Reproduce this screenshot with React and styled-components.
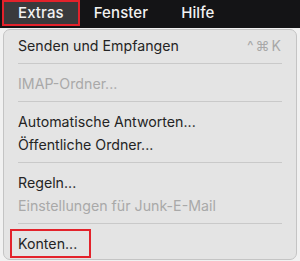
import React from "react";
import styled, { createGlobalStyle } from "styled-components";

const Global = createGlobalStyle`
  html, body { margin: 0; padding: 0; }
  body {
    width: 300px;
    height: 261px;
    overflow: hidden;
    background: #f0f0f0;
    font-family: Inter, "Liberation Sans", Arial, sans-serif;
    -webkit-font-smoothing: antialiased;
  }
`;

const Page = styled.div`
  width: 300px;
  height: 261px;
  display: flex;
  flex-direction: column;
  background: #f1f1f1;
`;

const MenuBar = styled.div`
  height: 28px;
  background: #141416;
  display: flex;
  align-items: stretch;
  padding-left: 2px;
  flex-shrink: 0;
`;

const MenuTitle = styled.div`
  display: flex;
  align-items: center;
  padding: 0 ${(p) => (p.$active ? "14px" : "11px")} 2px;
  margin-right: ${(p) => (p.$active ? "3px" : "11px")};
  height: 26px;
  box-sizing: border-box;
  color: #f2f2f2;
  font-size: 15px;
  font-weight: 500;
  letter-spacing: 0.1px;
  background: ${(p) => (p.$active ? "#3a3a3c" : "transparent")};
  border: ${(p) => (p.$active ? "2px solid #e3222b" : "none")};
`;

const Panel = styled.div`
  margin: 1px 3px 1px 3px;
  flex: 1;
  background: #e4e4e4;
  border: 1px solid #c4c4c4;
  border-radius: 7px;
  padding: 4px 0 3px;
  display: flex;
  flex-direction: column;
`;

const Item = styled.div`
  height: 23px;
  display: flex;
  align-items: center;
  justify-content: space-between;
  padding: 0 14px 0 14px;
  font-size: 14.2px;
  color: ${(p) => (p.$disabled ? "#a9a9a9" : "#242424")};
  white-space: nowrap;
`;

const Label = styled.span`
  ${(p) =>
    p.$boxed &&
    `
    padding: 4px 12px 4px 6px;
    margin: 0 -6px;
    outline: 2px solid #e3222b;
  `}
`;

const Shortcut = styled.span`
  color: #a8a8a8;
  font-size: 14px;
  letter-spacing: 2px;
  margin-right: -1px;
`;

const Separator = styled.div`
  height: 15px;
  display: flex;
  align-items: flex-start;
  padding: 6px 14px 0;
  box-sizing: border-box;
  &::before {
    content: "";
    flex: 1;
    height: 1px;
    background: #c9c9c9;
  }
`;

export default function App() {
  return (
    <>
      <Global />
      <Page>
        <MenuBar>
          <MenuTitle $active>Extras</MenuTitle>
          <MenuTitle>Fenster</MenuTitle>
          <MenuTitle>Hilfe</MenuTitle>
        </MenuBar>
        <Panel>
          <Item>
            <Label>Senden und Empfangen</Label>
            <Shortcut>^⌘K</Shortcut>
          </Item>
          <Separator />
          <Item $disabled>
            <Label>IMAP-Ordner...</Label>
          </Item>
          <Separator />
          <Item>
            <Label>Automatische Antworten...</Label>
          </Item>
          <Item>
            <Label>Öffentliche Ordner...</Label>
          </Item>
          <Separator />
          <Item>
            <Label>Regeln...</Label>
          </Item>
          <Item $disabled>
            <Label>Einstellungen für Junk-E-Mail</Label>
          </Item>
          <Separator />
          <Item>
            <Label $boxed>Konten...</Label>
          </Item>
        </Panel>
      </Page>
    </>
  );
}
